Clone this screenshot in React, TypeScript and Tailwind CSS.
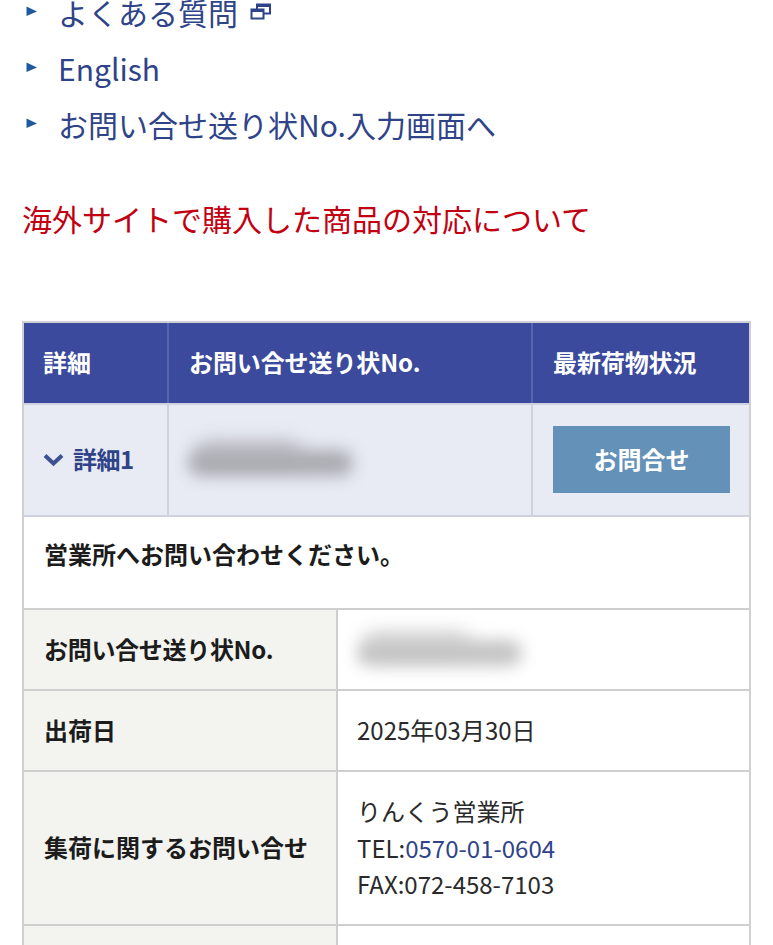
import React from "react";

const font = { fontFamily: '"Noto Sans CJK JP", "Noto Sans", sans-serif' };

function Arrow() {
  return (
    <svg width="13" height="13" viewBox="0 0 13 13" className="shrink-0">
      <path d="M1.5 1.5 L12 6.5 L1.5 11 Z" fill="#1f5a9e" />
    </svg>
  );
}

function NavItem({ children }: { children: React.ReactNode }) {
  return (
    <li className="flex h-[56px] items-center">
      <span className="mr-[19px] flex w-[15px] -translate-y-[1px] justify-center"><Arrow /></span>
      <span className="flex items-center text-[30px] text-[#2f4389]">{children}</span>
    </li>
  );
}

function Redacted({ color }: { color: string }) {
  return (
    <div className="relative h-[40px] w-[165px]">
      <div className={`absolute left-0 top-[10px] h-[26px] w-full rounded-full blur-[8px] ${color}`} />
      <div className={`absolute left-[8px] top-0 h-[22px] w-[105px] rounded-full opacity-60 blur-[9px] ${color}`} />
    </div>
  );
}

function InfoRow({ label, children, className }: { label: React.ReactNode; children: React.ReactNode; className: string }) {
  return (
    <div className={`flex border-b-2 border-[#cfcfcf] ${className}`}>
      <div className="flex w-[314px] shrink-0 items-center border-r-2 border-[#cfcfcf] bg-[#f3f4f0] pb-[2px] pl-[20px] text-[24px] font-bold text-[#1c1c1c]">
        {label}
      </div>
      <div className="flex flex-1 items-center pl-[19px] text-[24px] text-[#2a2a2a]">{children}</div>
    </div>
  );
}

export default function App() {
  return (
    <div className="h-[945px] w-[773px] overflow-hidden bg-white" style={font}>
      <ul className="-mt-[16px] ml-[24px]">
        <NavItem>
          よくある質問
          <svg width="22" height="18" viewBox="0 0 22 18" className="ml-[12px]">
            <rect x="7" y="1.5" width="13" height="9" fill="none" stroke="#2f4389" strokeWidth="2" />
            <rect x="7" y="1" width="13" height="3" fill="#2f4389" />
            <rect x="1.5" y="6.5" width="12" height="9" fill="#fff" stroke="#2f4389" strokeWidth="2" />
            <rect x="1" y="6" width="12" height="3" fill="#2f4389" />
          </svg>
        </NavItem>
        <NavItem>English</NavItem>
        <NavItem>お問い合せ送り状No.入力画面へ</NavItem>
      </ul>

      <p className="ml-[22px] mt-[38px] h-[56px] text-[30px] leading-[56px] text-[#c20012]">
        海外サイトで購入した商品の対応について
      </p>

      <div className="ml-[22px] mt-[75px] w-[729px] border-x-2 border-t-2 border-[#cfcfd4]">
        <div className="flex h-[80px] bg-[#3b4a9c] text-[24px] font-bold tracking-[-0.1px] text-white">
          <div className="flex w-[145px] items-center border-r-2 border-[#5366b0] pb-[2px] pl-[19px]">詳細</div>
          <div className="flex w-[364px] items-center border-r-2 border-[#5366b0] pb-[2px] pl-[20px]">お問い合せ送り状No.</div>
          <div className="flex flex-1 items-center pb-[2px] pl-[20px]">最新荷物状況</div>
        </div>

        <div className="flex h-[114px] border-y-2 border-[#cfd2de] bg-[#e8ebf4]">
          <div className="flex w-[145px] items-center border-r-2 border-[#cfd2de] pl-[19px] text-[24px] font-bold tracking-[-0.5px] text-[#2f4389]">
            <svg width="21" height="14" viewBox="0 0 21 14" className="mr-[9px]">
              <path d="M2 2.5 L10.5 10.5 L19 2.5" fill="none" stroke="#3e5190" strokeWidth="4" />
            </svg>
            <span className="-translate-y-[1px]">詳細1</span>
          </div>
          <div className="flex w-[364px] items-center border-r-2 border-[#cfd2de] pl-[19px]">
            <Redacted color="bg-[#a9aab0]" />
          </div>
          <div className="flex flex-1 items-center pb-[2px] pl-[20px]">
            <div className="flex h-[67px] w-[177px] items-center justify-center bg-[#6491b8] text-[24px] font-bold text-white">
              お問合せ
            </div>
          </div>
        </div>

        <div className="flex h-[93px] items-center border-b-2 border-[#cfcfcf] pb-[17px] pl-[20px] text-[24px] font-bold text-[#1c1c1c]">
          営業所へお問い合わせください。
        </div>

        <InfoRow label={<span className="tracking-[-0.3px]">お問い合せ送り状No.</span>} className="h-[81px]">
          <Redacted color="bg-[#c4c4c4]" />
        </InfoRow>
        <InfoRow label="出荷日" className="h-[81px]">
          <span className="-translate-y-[1px]">2025年03月30日</span>
        </InfoRow>
        <InfoRow label="集荷に関するお問い合せ" className="h-[154px]">
          <div className="leading-[36.5px]">
            <div>りんくう営業所</div>
            <div>
              TEL:<span className="text-[#2f4389]">0570-01-0604</span>
            </div>
            <div>FAX:072-458-7103</div>
          </div>
        </InfoRow>
        <div className="flex h-[60px]">
          <div className="w-[314px] border-r-2 border-[#cfcfcf] bg-[#f3f4f0]" />
          <div className="flex-1" />
        </div>
      </div>
    </div>
  );
}
